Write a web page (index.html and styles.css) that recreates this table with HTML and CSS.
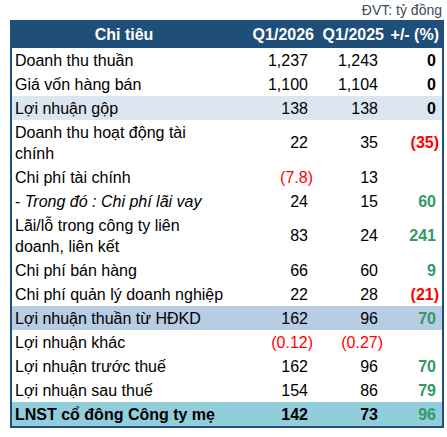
FILE: index.html
```html
<!DOCTYPE html>
<html lang="vi">
<head>
  <meta charset="UTF-8" />
  <title>Kết quả kinh doanh Q1/2026</title>
  <link rel="stylesheet" href="styles.css">
</head>
<body>

<div class="report">
  <div class="unit">ĐVT: tỷ đồng</div>

  <table class="fin">
    <colgroup>
      <col class="c-label">
      <col class="c-num">
      <col class="c-num2">
      <col class="c-pct">
    </colgroup>
    <thead>
      <tr>
        <th class="label">Chỉ tiêu</th>
        <th>Q1/2026</th>
        <th>Q1/2025</th>
        <th>+/- (%)</th>
      </tr>
    </thead>
    <tbody>
      <tr>
        <td class="label">Doanh thu thuần</td>
        <td>1,237</td><td>1,243</td><td class="pct">0</td>
      </tr>
      <tr>
        <td class="label">Giá vốn hàng bán</td>
        <td>1,100</td><td>1,104</td><td class="pct">0</td>
      </tr>
      <tr class="band-light">
        <td class="label">Lợi nhuận gộp</td>
        <td>138</td><td>138</td><td class="pct">0</td>
      </tr>
      <tr class="tall">
        <td class="label">Doanh thu hoạt động tài chính</td>
        <td>22</td><td>35</td><td class="pct"><span class="down">(35)</span></td>
      </tr>
      <tr>
        <td class="label">Chi phí tài chính</td>
        <td><span class="down">(7.8)</span></td><td>13</td><td class="pct"></td>
      </tr>
      <tr>
        <td class="label">- <i>Trong đó : Chi phí lãi vay</i></td>
        <td>24</td><td>15</td><td class="pct up">60</td>
      </tr>
      <tr class="tall">
        <td class="label">Lãi/lỗ trong công ty liên doanh, liên kết</td>
        <td>83</td><td>24</td><td class="pct up">241</td>
      </tr>
      <tr>
        <td class="label">Chi phí bán hàng</td>
        <td>66</td><td>60</td><td class="pct up">9</td>
      </tr>
      <tr>
        <td class="label">Chi phí quản lý doanh nghiệp</td>
        <td>22</td><td>28</td><td class="pct"><span class="down">(21)</span></td>
      </tr>
      <tr class="band-mid">
        <td class="label">Lợi nhuận thuần từ HĐKD</td>
        <td>162</td><td>96</td><td class="pct up">70</td>
      </tr>
      <tr>
        <td class="label">Lợi nhuận khác</td>
        <td><span class="down">(0.12)</span></td><td><span class="down">(0.27)</span></td><td class="pct"></td>
      </tr>
      <tr>
        <td class="label">Lợi nhuận trước thuế</td>
        <td>162</td><td>96</td><td class="pct up">70</td>
      </tr>
      <tr>
        <td class="label">Lợi nhuận sau thuế</td>
        <td>154</td><td>86</td><td class="pct up">79</td>
      </tr>
      <tr class="band-total">
        <td class="label">LNST cổ đông Công ty mẹ</td>
        <td>142</td><td>73</td><td class="pct up">96</td>
      </tr>
    </tbody>
  </table>
</div>

</body>
</html>
```

FILE: styles.css
```css
body {
  margin: 0;
  background: white;
  font-family: "Liberation Sans", Arial, sans-serif;
  color: black;
}

.report {
  width: 432px;
  margin-left: 10px;
}

.unit {
  height: 20px;
  line-height: 20px;
  font-size: 14px;
  color: #3b4a5c;
  text-align: right;
}

.fin {
  width: 432px;
  border-collapse: collapse;
  border: 2px solid #1f4e79;
  font-size: 16px;
  table-layout: fixed;
}

.c-label { width: 235px; }
.c-num { width: 71px; }
.c-num2 { width: 70px; }
.c-pct { width: 56px; }

.fin th {
  background: #1f4e79;
  color: white;
  font-weight: bold;
  height: 26px;
  padding: 0 3px 0 0;
  text-align: right;
}

.fin th.label {
  text-align: center;
  padding: 0 10px 0 0;
}

.fin td {
  height: 24px;
  padding: 0 9px 0 0;
  line-height: 21px;
  text-align: right;
  vertical-align: middle;
  white-space: nowrap;
}

.fin td.label {
  text-align: left;
  padding: 0 21px 0 3px;
  white-space: normal;
}

.fin td.pct {
  padding-right: 6px;
  font-weight: bold;
}

.fin tr.tall td {
  height: 45px;
}

.down {
  color: #ff0000;
  margin-right: -5px;
}

.pct .down {
  margin-right: -3px;
}

.up {
  color: #339966;
}

.band-light td { background: #dce6f1; }
.band-mid td { background: #b8cce4; }
.band-total td {
  background: #92cddc;
  font-weight: bold;
}
```
